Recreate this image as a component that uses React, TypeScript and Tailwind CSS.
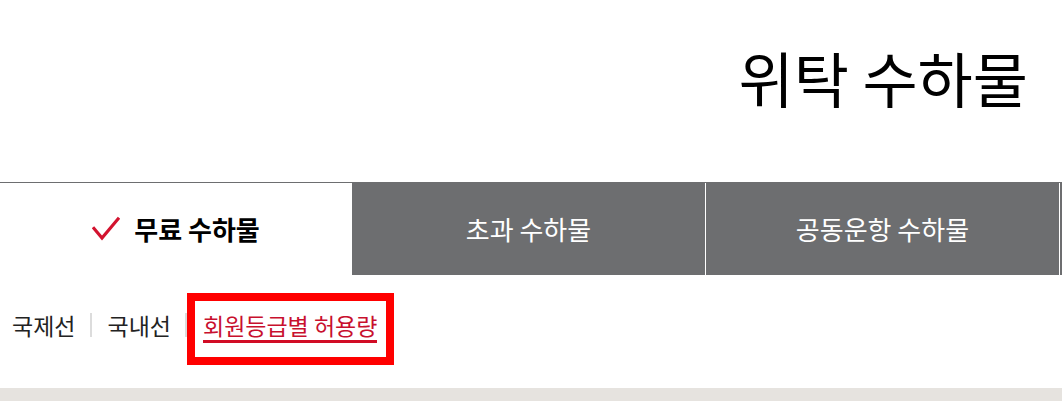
import React from 'react';

const font = { fontFamily: '"Noto Sans CJK KR", "Noto Sans", sans-serif' };

// 탭 목록
const tabs = [
    { label: '무료 수하물', active: true },
    { label: '초과 수하물', active: false },
    { label: '공동운항 수하물', active: false },
];

const CheckIcon: React.FC = () => (
    <svg width="28" height="26" viewBox="0 0 28 26" fill="none">
        <path d="M2 12.5 L10 22 L26 3" stroke="#d3132f" strokeWidth="3.2" strokeLinecap="square" />
    </svg>
);

const App: React.FC = () => {
    return (
        <div className="w-[1062px] h-[401px] bg-white overflow-hidden" style={font}>
            {/* 제목 */}
            <div className="h-[182px] flex justify-end pt-[32px] pr-[34px]">
                <h1 className="text-[60px] leading-[90px] text-black font-normal">위탁 수하물</h1>
            </div>

            {/* 탭 */}
            <div className="flex h-[93px] border-t border-[#6d6e70]">
                {tabs.map((tab) => (
                    <div
                        key={tab.label}
                        className={
                            tab.active
                                ? 'w-[352px] shrink-0 flex items-center justify-center gap-[14px] bg-white text-black font-bold text-[26px]'
                                : 'w-[354px] shrink-0 flex items-center justify-center bg-[#6d6e70] text-white text-[26px] border-r border-white'
                        }
                    >
                        {tab.active && <CheckIcon />}
                        <span className="leading-[30px]">{tab.label}</span>
                    </div>
                ))}
                <div className="flex-1 bg-[#6d6e70]" />
            </div>

            {/* 하위 메뉴 */}
            <div className="h-[113px] flex items-start pt-[18px] pl-[12px]">
                <div className="flex items-center h-[72px] text-[23px] text-[#222]">
                    <span className="mb-[8px]">국제선</span>
                    <span className="w-[2px] h-[24px] bg-[#dcdcdc] mx-[15px] mb-[8px]" />
                    <span className="mb-[8px]">국내선</span>
                    <span className="w-[2px] h-[24px] bg-[#dcdcdc] ml-[14px] mb-[8px]" />
                    <div className="h-[72px] border-[8px] border-[#ff0000] flex items-center pl-[8px] pr-[9px]">
                        <span className="text-[#c8102e] border-b-[3px] border-[#d10c25] leading-[26px] pb-[2px] mb-[4px]">
                            회원등급별 허용량
                        </span>
                    </div>
                </div>
            </div>

            <div className="h-[13px] bg-[#e6e3df]" />
        </div>
    );
};

export default App;
